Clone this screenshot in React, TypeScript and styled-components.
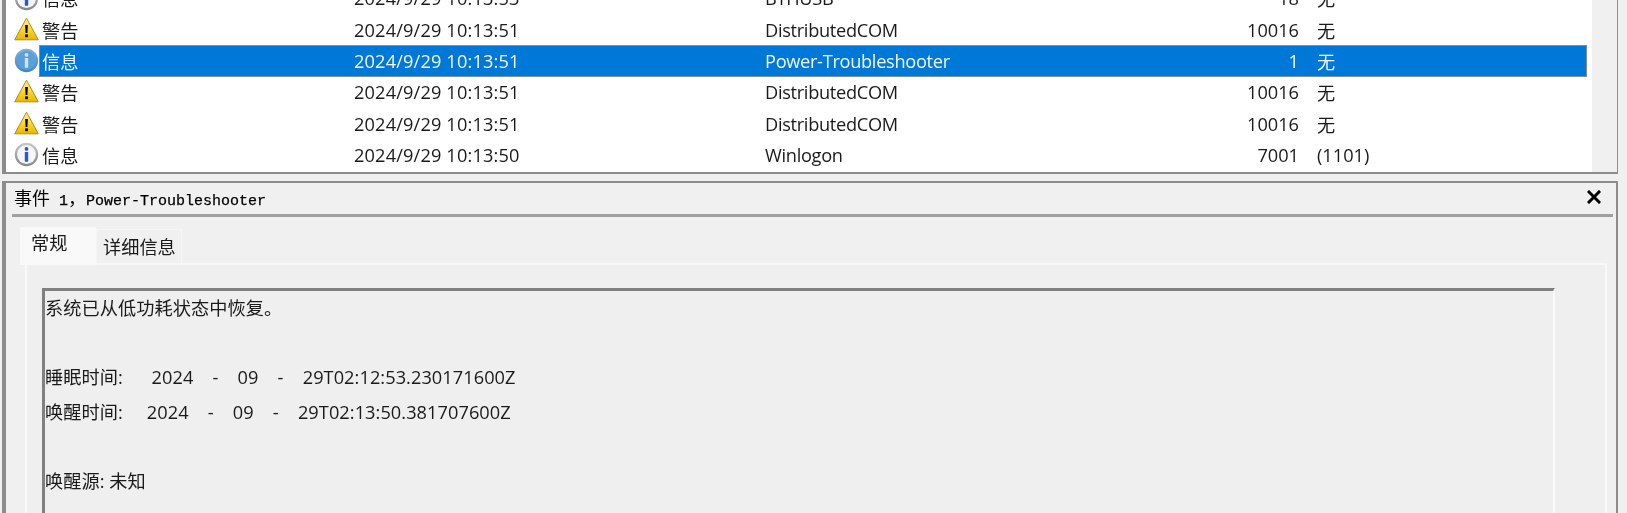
import React from "react";
import styled, { createGlobalStyle } from "styled-components";

const UI_FONT = `"Open Sans", "Noto Sans CJK SC", sans-serif`;

type Level = "warn" | "info";

interface EventRow {
  level: Level;
  time: string;
  source: string;
  id: string;
  task: string;
  selected?: boolean;
}

const rows: EventRow[] = [
  { level: "info", time: "2024/9/29 10:13:53", source: "BTHUSB", id: "18", task: "无" },
  { level: "warn", time: "2024/9/29 10:13:51", source: "DistributedCOM", id: "10016", task: "无" },
  { level: "info", time: "2024/9/29 10:13:51", source: "Power-Troubleshooter", id: "1", task: "无", selected: true },
  { level: "warn", time: "2024/9/29 10:13:51", source: "DistributedCOM", id: "10016", task: "无" },
  { level: "warn", time: "2024/9/29 10:13:51", source: "DistributedCOM", id: "10016", task: "无" },
  { level: "info", time: "2024/9/29 10:13:50", source: "Winlogon", id: "7001", task: "(1101)" },
];

const levelText: Record<Level, string> = { warn: "警告", info: "信息" };

const WarnIcon = () => (
  <svg width="25" height="24" viewBox="0 0 25 24">
    <defs>
      <linearGradient id="warnFill" x1="0" y1="0" x2="0" y2="1">
        <stop offset="0" stopColor="#fff29a" />
        <stop offset="0.5" stopColor="#fcd92a" />
        <stop offset="1" stopColor="#ecb400" />
      </linearGradient>
    </defs>
    <path d="M12.5 1.2 L24.3 22.8 H0.7 Z" fill="url(#warnFill)" stroke="#a98d2a" strokeLinejoin="round" />
    <path d="M11.1 8 h2.8 l-.5 8 h-1.8 Z" fill="#000" />
    <rect x="11.1" y="17.4" width="2.8" height="2.8" fill="#000" />
  </svg>
);

const InfoIcon = ({ selected }: { selected?: boolean }) => (
  <svg width="25" height="25" viewBox="0 0 25 25">
    <defs>
      <linearGradient id="infoRing" x1="0" y1="0" x2="0" y2="1">
        <stop offset="0" stopColor="#c9c9c9" />
        <stop offset="1" stopColor="#858585" />
      </linearGradient>
      <linearGradient id="infoRingSel" x1="0" y1="0" x2="0" y2="1">
        <stop offset="0" stopColor="#7fb2dc" />
        <stop offset="1" stopColor="#3f87c6" />
      </linearGradient>
    </defs>
    <circle cx="12.5" cy="12.5" r="11.7" fill={selected ? "url(#infoRingSel)" : "url(#infoRing)"} />
    <circle cx="12.5" cy="12.5" r="9.4" fill={selected ? "#5b9fd9" : "#f4f6fb"} />
    <circle cx="12.5" cy="6.9" r="1.9" fill={selected ? "#cfe3f5" : "#2b58c8"} />
    <rect x="10.8" y="10" width="3.4" height="9.7" rx="0.6" fill={selected ? "#cfe3f5" : "#2b58c8"} />
  </svg>
);

const App: React.FC = () => {
  return (
    <>
      <GlobalStyle />
      <Page>
        <ListPane>
          <ListBody>
            <Rows>
              {rows.map((row, i) => (
                <Row key={i}>
                  <IconSlot $level={row.level}>
                    {row.level === "warn" ? <WarnIcon /> : <InfoIcon selected={row.selected} />}
                  </IconSlot>
                  <Cells $selected={row.selected}>
                    <Cell>{levelText[row.level]}</Cell>
                    <TimeCell>{row.time}</TimeCell>
                    <SourceCell>{row.source}</SourceCell>
                    <IdCell>{row.id}</IdCell>
                    <TaskCell>{row.task}</TaskCell>
                  </Cells>
                </Row>
              ))}
            </Rows>
          </ListBody>
          <ScrollTrack />
        </ListPane>
        <DetailPane>
          <TitleBar>
            <Title>
              事件<TitleMono> 1</TitleMono>，<TitleMono>Power-Troubleshooter</TitleMono>
            </Title>
            <CloseGlyph viewBox="0 0 14 14" width="14" height="14">
              <path d="M2 2 L12 12 M12 2 L2 12" stroke="#000" strokeWidth="3" strokeLinecap="square" />
            </CloseGlyph>
          </TitleBar>
          <Tabs>
            <Tab $active>常规</Tab>
            <Tab>详细信息</Tab>
          </Tabs>
          <TabPanel>
            <MessageBox>
              <Line>系统已从低功耗状态中恢复。</Line>
              <Line />
              <Line>睡眠时间:      2024    -    09    -    29T02:12:53.230171600Z</Line>
              <Line>唤醒时间:     2024    -    09    -    29T02:13:50.381707600Z</Line>
              <Line />
              <Line>唤醒源: 未知</Line>
            </MessageBox>
          </TabPanel>
        </DetailPane>
      </Page>
    </>
  );
};

export default App;

const GlobalStyle = createGlobalStyle`
  html, body {
    margin: 0;
    padding: 0;
    background: #f0f0f0;
    overflow: hidden;
  }
`;

const Page = styled.div`
  width: 1627px;
  height: 513px;
  overflow: hidden;
  box-sizing: border-box;
  padding: 0 9px 0 2px;
  font-family: ${UI_FONT};
  font-size: 18.2px;
  color: #1a1a1a;
  background: #f0f0f0;
  display: flex;
  flex-direction: column;
  gap: 7px;
  filter: blur(0.3px);
`;

const ListPane = styled.div`
  height: 174px;
  flex: none;
  box-sizing: border-box;
  display: flex;
  overflow: hidden;
  border: 2px solid #8c8c8c;
  border-top: none;
  border-left: 4px solid #8c8c8c;
  border-right-width: 1px;
  background: #fff;
`;

const ListBody = styled.div`
  width: 1586px;
  flex: none;
  overflow: hidden;
`;

const ScrollTrack = styled.div`
  flex: 1;
  background: #f0f0f0;
`;

const Rows = styled.div`
  margin-top: -17.3px;
`;

const Row = styled.div`
  height: 31.3px;
  display: flex;
  align-items: center;
`;

const IconSlot = styled.div<{ $level: Level }>`
  width: 33px;
  flex: none;
  box-sizing: border-box;
  padding-left: 8px;
  display: flex;
  align-items: center;
  margin-top: ${(p) => (p.$level === "warn" ? "-2px" : "0")};

  svg {
    display: block;
  }
`;

const Cells = styled.div<{ $selected?: boolean }>`
  width: 1548px;
  height: 100%;
  box-sizing: border-box;
  display: grid;
  grid-template-columns: 312px 411px 438px 99px 1fr;
  align-items: center;
  background: ${(p) => (p.$selected ? "#0078d7" : "transparent")};
  color: ${(p) => (p.$selected ? "#f2f7fc" : "inherit")};
  box-shadow: ${(p) => (p.$selected ? "inset 0 0 0 1px #7f8c99" : "none")};
`;

const Cell = styled.div`
  padding-left: 3px;
  white-space: nowrap;
`;

const TimeCell = styled(Cell)`
  letter-spacing: 0.15px;
`;

const SourceCell = styled(Cell)`
  letter-spacing: -0.3px;
`;

const IdCell = styled.div`
  text-align: right;
  white-space: nowrap;
`;

const TaskCell = styled.div`
  padding-left: 18px;
  white-space: nowrap;
`;

const DetailPane = styled.div`
  flex: 1;
  min-height: 0;
  border-top: 2px solid #8c8c8c;
  border-left: 4px solid #8c8c8c;
  border-right: 2px solid #8c8c8c;
  padding: 0 3px 0 6px;
  background: #f0f0f0;
`;

const TitleBar = styled.div`
  height: 34px;
  box-sizing: border-box;
  border-bottom: 3px solid #a0a0a0;
  display: flex;
  align-items: center;
  justify-content: space-between;
  padding: 0 12px 3px 2px;
`;

const Title = styled.div`
  font-size: 18px;
  white-space: pre;
  color: #000;
`;

const TitleMono = styled.span`
  font-family: "Liberation Mono", monospace;
  font-size: 15px;
  -webkit-text-stroke: 0.25px #000;
`;

const CloseGlyph = styled.svg`
  display: block;
`;

const Tabs = styled.div`
  display: flex;
  align-items: flex-start;
  margin: 10px 0 0 8px;
  height: 36px;
`;

const Tab = styled.div<{ $active?: boolean }>`
  box-sizing: border-box;
  position: relative;
  z-index: ${(p) => (p.$active ? 1 : 0)};
  width: ${(p) => (p.$active ? "76px" : "86px")};
  height: ${(p) => (p.$active ? "38px" : "34px")};
  margin-top: ${(p) => (p.$active ? "0" : "2px")};
  padding: ${(p) => (p.$active ? "0 0 10px 10px" : "0 0 2px 6px")};
  display: flex;
  align-items: center;
  background: ${(p) => (p.$active ? "#f9f9f9" : "#f0f0f0")};
  border: 1px solid ${(p) => (p.$active ? "#f9f9f9" : "#f6f6f6")};
  border-bottom: none;
`;

const TabPanel = styled.div`
  margin: 0 6px 0 13px;
  padding: 23px 50px 0 15px;
  height: 300px;
  background: #efefef;
  border: 2px solid #f8f8f8;
  border-bottom: none;
`;

const MessageBox = styled.div`
  height: 300px;
  box-sizing: border-box;
  border-top: 3px solid #808080;
  border-left: 3px solid #808080;
  border-right: 2px solid #fafafa;
`;

const Line = styled.div`
  height: 34.7px;
  line-height: 34.7px;
  white-space: pre;
  letter-spacing: 0.06px;
`;
